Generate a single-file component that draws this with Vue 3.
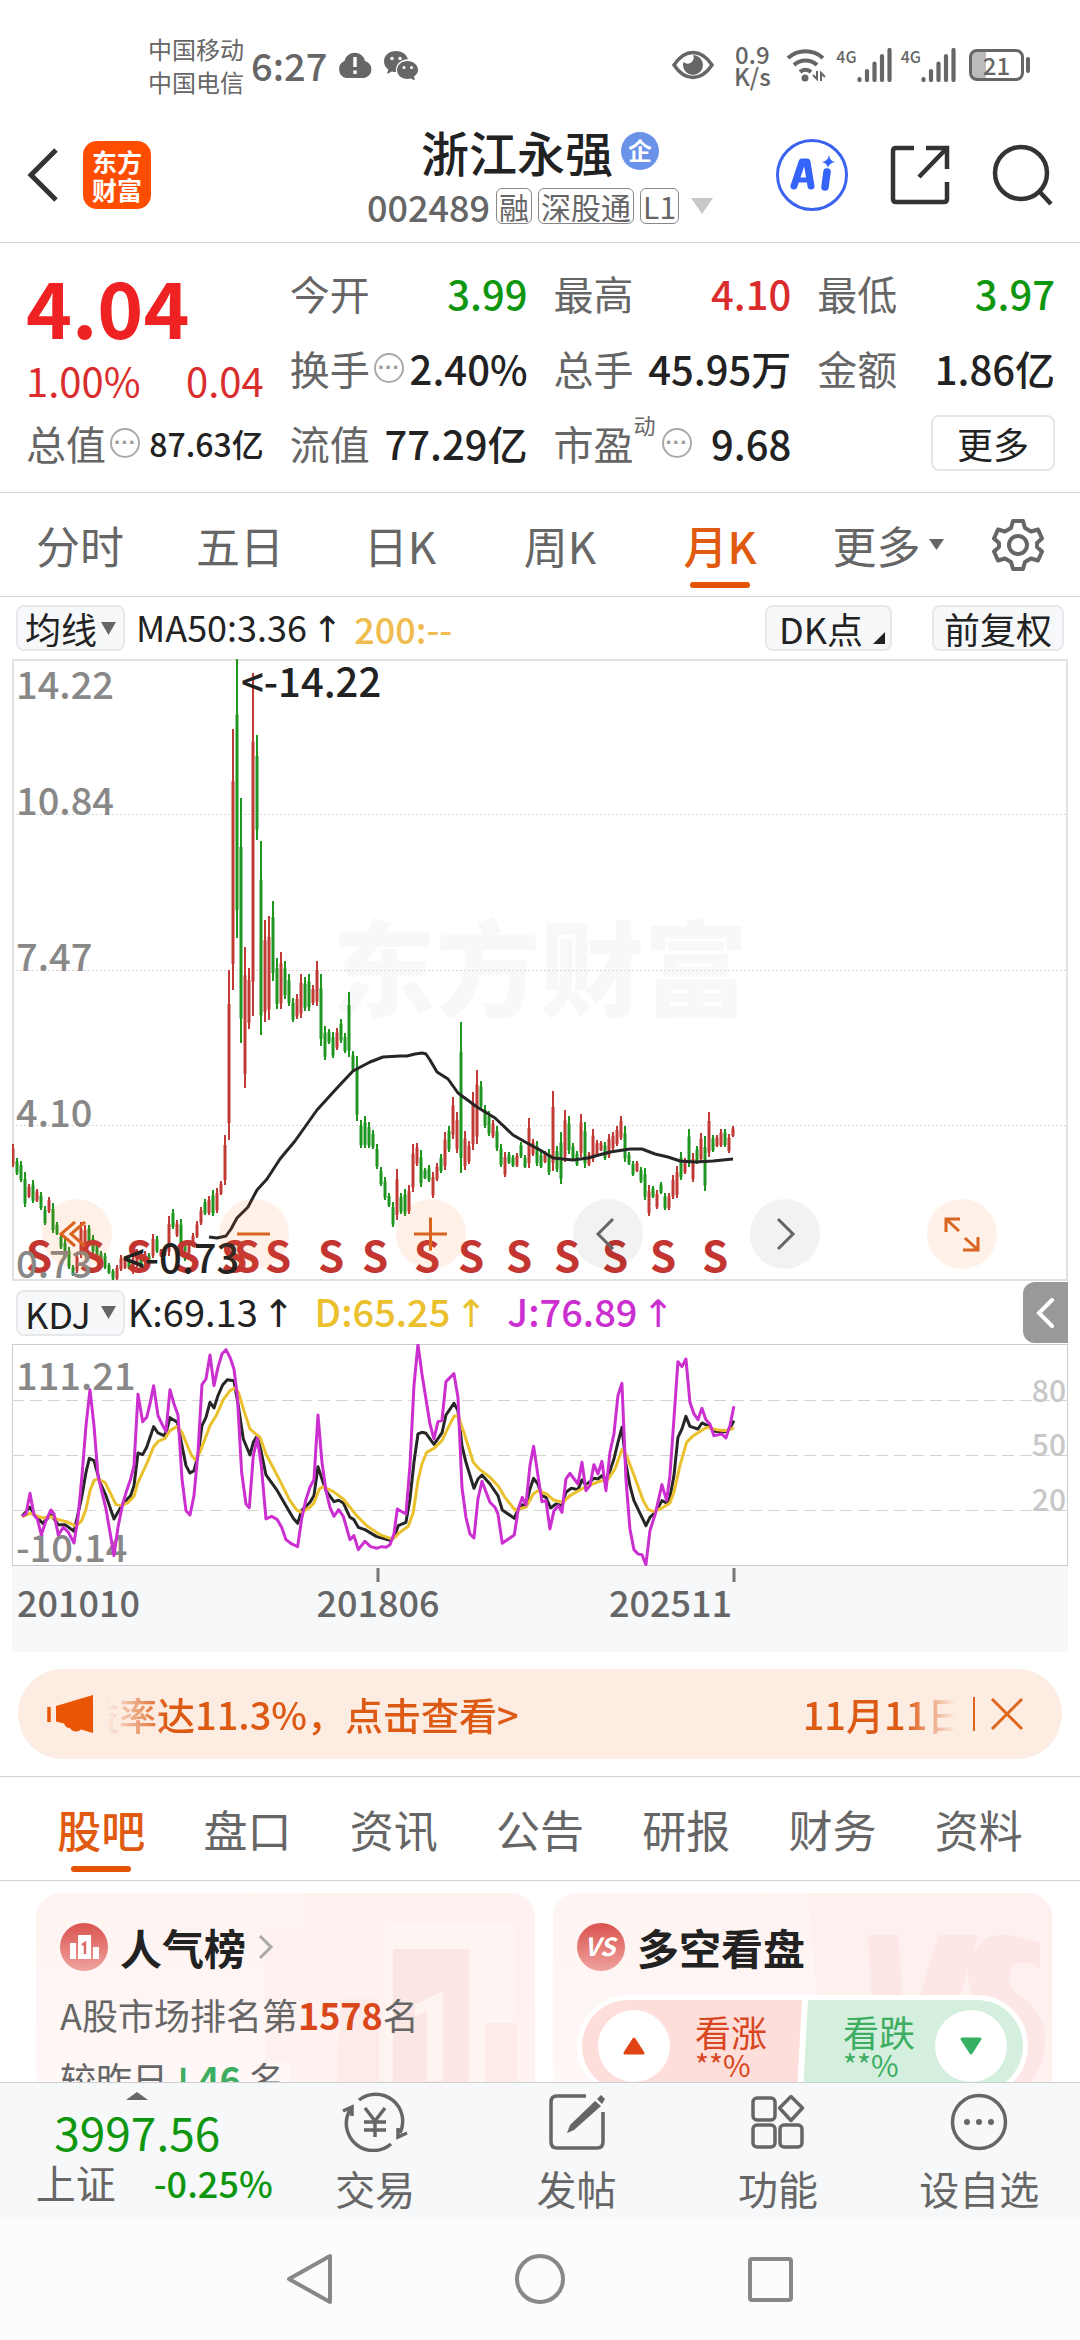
<script setup>
import { computed } from 'vue'

const quoteColumns = [
  [
    { label: '今开', value: '3.99', tone: 'down' },
    { label: '换手', value: '2.40%', hint: true },
    { label: '流值', value: '77.29亿' }
  ],
  [
    { label: '最高', value: '4.10', tone: 'up' },
    { label: '总手', value: '45.95万' },
    { label: '市盈', sup: '动', value: '9.68', hint: true }
  ],
  [
    { label: '最低', value: '3.97', tone: 'down' },
    { label: '金额', value: '1.86亿' }
  ]
]

const periods = ['分时', '五日', '日K', '周K', '月K']
const sections = ['股吧', '盘口', '资讯', '公告', '研报', '财务', '资料']

// Monthly bars: direction, then top and bottom of the range in chart units
const bars = `r485-508 g499-516 g502-523 g513-548 r525-539 g521-544 r530-543 g533-551 g547-566 r538-554
g544-574 g563-576 g575-590 g580-600 g588-610 g606-617 r594-614 r563-599 r566-592 g566-584
g576-594 g584-598 g592-606 g594-610 g604-615 g610-621 r606-621 r596-612 r598-610 g597-610
r596-615 r590-608 g594-612 r592-604 g594-606 r575-599 g577-594 r590-598 r589-597 r557-597
g550-570 r561-578 g560-589 g582-602 r584-595 r574-588 r562-579 r548-566 g540-556 r537-556
g531-557 r529-554 r522-536 r476-526 r311-481 r70-331 g0-279 g139-384 r288-429 r309-370
r14-357 g76-181 g182-376 r261-363 r257-361 g242-322 g299-350 r293-350 g302-340 g315-347
g339-363 r335-360 r315-359 g318-352 g315-352 r326-346 r302-347 g315-387 g367-401 g370-385
g373-399 r369-391 g360-384 g374-394 g333-398 g392-413 g397-462 g461-489 g457-489 g463-489
g471-490 g485-510 g508-527 g518-541 g534-548 g543-568 r510-561 g534-555 g530-557 r526-555
r485-533 r484-507 g491-528 g509-520 g506-523 r513-539 r504-522 g495-514 r473-511 g467-493
r438-480 r453-494 g363-514 r472-511 r482-505 r433-491 r411-485 g422-450 g446-469 g452-477
r461-479 g467-492 g485-508 r493-518 g493-505 g496-508 r494-508 g483-499 g496-509 r459-509
r480-497 g482-507 g493-509 r492-504 g490-516 r432-512 g487-513 g473-525 r451-503 g457-495
g484-501 g492-507 r455-498 g463-509 r493-507 r470-503 r481-497 r482-492 g483-501 r475-499
r473-491 r467-487 r457-481 g467-503 g493-506 g502-517 r502-513 g508-524 g509-541 r526-557
g527-539 r531-550 g523-535 g534-551 r534-551 r516-540 r507-539 g493-521 r499-515 g470-508
r494-523 g487-505 r474-503 g477-532 r453-498 g476-493 r476-488 r470-488 g470-488 r475-494 r467-478`

const candles = computed(() =>
  bars.split(/\s+/).map((bar, i) => {
    const [top, bottom] = bar.slice(1).split('-').map(Number)
    const span = bottom - top
    return {
      x: 1 + i * 4,
      top,
      bottom,
      bodyTop: top + span * 0.2,
      bodyBottom: bottom - span * 0.1,
      color: bar[0] === 'r' ? '#c23a35' : '#1e9620'
    }
  })
)

const sellMarks = [39, 92, 139, 187, 234, 247, 278, 331, 375, 427, 471, 519, 567, 615, 663, 715]

const ma50 = '209,578 217,579 226,577 231,570 237,559 248,548 257,531 267,520 280,500 295,482 317,451 337,429 353,412 370,403 383,398 400,397 407,397 415,395 422,394 426,395 430,401 437,413 448,420 458,434 477,448 495,459 513,476 527,484 540,491 553,499 573,501 588,499 610,493 630,490 642,490 655,495 668,498 680,502 695,503 713,502 733,500'

const lineJ = '66,712 78,705 90,643 102,708 112,720 124,768 138,725 153,693 162,705 175,768 190,745 205,760 222,792 234,715 246,590 258,440 270,332 282,440 294,590 306,640 318,690 330,760 342,830 354,745 368,675 380,635 392,600 402,560 414,346 428,428 440,415 450,375 461,320 474,410 486,435 498,458 510,332 522,375 534,408 546,600 558,695 570,708 582,650 594,520 606,317 618,300 630,228 642,320 654,265 666,225 678,212 690,235 702,270 712,350 725,580 738,675 748,686 760,530 772,478 784,560 798,720 815,712 832,722 845,745 858,782 875,795 893,803 905,720 917,665 930,625 942,602 954,408 966,550 978,635 990,685 1002,712 1016,692 1030,712 1050,782 1062,770 1075,812 1095,787 1112,803 1130,808 1145,803 1158,805 1170,797 1182,765 1192,690 1218,705 1230,560 1242,320 1254,196 1266,285 1290,435 1302,480 1314,428 1326,425 1338,308 1362,284 1374,355 1386,625 1398,715 1410,765 1422,777 1434,660 1446,607 1470,670 1485,685 1494,705 1507,793 1543,768 1555,690 1567,655 1578,678 1590,560 1601,502 1614,590 1626,668 1638,665 1650,750 1662,695 1675,680 1686,700 1698,600 1710,583 1734,615 1746,550 1758,635 1770,620 1782,557 1794,585 1806,547 1818,635 1830,520 1842,465 1854,350 1866,313 1878,600 1890,750 1902,812 1914,825 1926,827 1938,857 1950,755 1966,705 1986,617 2000,665 2010,590 2022,420 2034,248 2046,263 2058,240 2070,370 2082,405 2094,422 2106,388 2118,422 2130,435 2142,470 2166,465 2178,477 2190,440 2202,382'

const lineK = '66,712 90,685 104,708 128,733 153,708 175,737 195,737 222,757 234,705 246,650 258,580 268,538 282,545 300,610 318,650 342,720 368,675 392,650 402,620 414,522 428,527 440,505 461,443 474,462 492,470 500,455 510,416 532,430 546,500 558,560 570,582 582,575 594,530 606,440 618,415 630,370 642,387 654,350 668,318 682,302 702,305 715,380 730,480 750,528 760,490 772,470 784,520 798,588 832,635 858,680 880,718 893,733 905,695 930,670 942,650 954,563 966,600 978,635 1002,668 1016,664 1030,672 1050,715 1062,722 1075,745 1095,752 1130,773 1170,784 1182,775 1195,740 1218,730 1230,660 1242,550 1254,465 1266,460 1278,463 1302,496 1326,462 1338,408 1362,373 1374,395 1386,500 1398,550 1422,628 1434,600 1446,588 1470,615 1494,650 1507,693 1543,718 1555,690 1567,677 1578,680 1590,630 1601,598 1614,615 1626,650 1638,655 1652,687 1668,675 1686,680 1698,640 1714,628 1734,632 1746,603 1758,618 1782,598 1794,600 1806,590 1818,605 1830,575 1842,540 1854,490 1866,445 1878,555 1890,620 1902,665 1938,740 1950,715 1966,700 1986,665 2000,672 2010,655 2022,590 2034,475 2046,450 2058,412 2070,442 2094,450 2106,432 2130,443 2142,457 2178,458 2190,448 2202,425'

const lineD = '66,714 90,703 128,717 153,713 175,722 205,730 228,742 245,725 258,690 270,635 282,605 292,600 315,610 335,650 348,677 365,680 385,670 402,652 414,610 440,555 461,503 475,487 495,478 510,455 532,442 546,460 560,495 575,530 586,542 600,520 630,440 650,407 670,362 690,335 705,327 716,342 732,395 750,450 765,463 780,475 798,525 832,590 870,665 890,693 905,700 930,685 942,672 958,630 970,623 1000,638 1030,660 1070,710 1100,740 1140,767 1170,778 1182,778 1200,760 1225,742 1240,700 1254,605 1266,555 1280,520 1302,508 1326,485 1345,445 1362,412 1374,410 1390,455 1420,550 1440,572 1470,595 1495,622 1515,655 1545,693 1578,685 1600,645 1614,635 1640,645 1660,663 1690,670 1710,650 1745,630 1770,618 1800,607 1825,600 1845,570 1866,512 1880,530 1910,610 1930,665 1945,692 1962,698 1990,685 2010,672 2022,640 2040,560 2060,490 2080,470 2120,445 2150,452 2180,455 2202,447'

const controls = [
  { name: '最早', warm: true, d: 'M33 23 19 35l14 12M43 23 29 35l14 12' },
  { name: '缩小', warm: true, d: 'M18 35h33' },
  { name: '放大', warm: true, d: 'M18 35h33M34.5 18.500v33' },
  { name: '向左', warm: false, d: 'M40 20 25 35l15 15' },
  { name: '向右', warm: false, d: 'M28 20 43 35 28 50' },
  { name: '全屏', warm: true, d: 'M19 33V20h14M20 21l12 11M51 38v13H36M50 50 38 39' }
]
</script>

<template>
  <div class="app">
    <div class="status">
      <div class="carriers"><span>中国移动</span><span>中国电信</span></div>
      <span class="clock">6:27</span>
      <svg class="cloud" width="36" height="28" viewBox="0 0 36 28">
        <path d="M9 27a9 9 0 0 1-1.500-17A10.500 10.500 0 0 1 28 10a8.700 8.700 0 0 1-1 17Z" fill="#666" />
        <path d="M18 6v10M18 19.500v3.500" stroke="#fff" stroke-width="3.400" />
      </svg>
      <svg width="36" height="30" viewBox="0 0 36 30">
        <path d="M13 1C6 1 1 5.600 1 11.500c0 3.300 1.600 6 4.200 8L4 24l5-2.600c1.300.4 2.700.5 4 .5C12 15 17 9.500 25 9.300 23.500 4 18.600 1 13 1Z" fill="#666" />
        <path d="M24.500 11c-6 0-10.500 4-10.500 9s4.500 9 10.500 9c1.200 0 2.300-.2 3.300-.5L32 30.500l-1-4c2.600-1.700 4-4 4-6.500 0-5-4.500-9-10.500-9Z" fill="#666" />
        <g fill="#fff"><circle cx="9" cy="8.500" r="1.700" /><circle cx="17" cy="8.500" r="1.700" /><circle cx="21" cy="17.500" r="1.500" /><circle cx="28.500" cy="17.500" r="1.500" /></g>
      </svg>
      <div class="status-right">
        <svg width="42" height="30" viewBox="0 0 42 30">
          <path d="M2 15C8 6 14 2.500 21 2.500S34 6 40 15c-6 9-12 12.500-19 12.500S8 24 2 15Z" fill="none" stroke="#666" stroke-width="3.500" />
          <path d="M21 5a10 10 0 1 1-10 10c0-1 .2-2 .5-3a6 6 0 0 0 9.500-7Z" fill="#666" />
        </svg>
        <div class="speed"><span>0.9</span><span>K/s</span></div>
        <svg width="42" height="36" viewBox="0 0 42 36">
          <g fill="none" stroke="#666" stroke-width="4">
            <path d="M2 11a26 26 0 0 1 35 0M8 18a17 17 0 0 1 23 0M14 25a8 8 0 0 1 11 0" />
          </g>
          <circle cx="19" cy="31" r="3.500" fill="#666" />
          <path d="M31 24v8l-4-4M35 34v-8l4 4" fill="none" stroke="#666" stroke-width="2" />
        </svg>
        <div v-for="n in 2" :key="n" class="signal">
          <span>4G</span>
          <svg width="36" height="34" viewBox="0 0 36 34">
            <path d="M2.500 31v1M10 23v9M17.500 15.500V32M25 8v24M32.500 2v30" stroke="#666" stroke-width="4.200" stroke-linecap="round" />
          </svg>
        </div>
        <div class="battery"><span>21</span></div>
      </div>
    </div>

    <header class="header">
      <div class="head-side">
        <button class="icon-btn" aria-label="返回">
          <svg width="34" height="56" viewBox="0 0 34 56"><path d="M30 3 5 28l25 25" fill="none" stroke="#333" stroke-width="5" /></svg>
        </button>
        <div class="logo"><span>东方</span><span>财富</span></div>
      </div>
      <div class="head-title">
        <h1>浙江永强<span class="corp">企</span></h1>
        <div class="code">
          <span>002489</span><i>融</i><i>深股通</i><i>L1</i>
          <svg width="22" height="16" viewBox="0 0 22 16"><path d="M0 0h22L11 16Z" fill="#c8c8c8" /></svg>
        </div>
      </div>
      <div class="head-side head-actions">
        <button class="icon-btn" aria-label="Ai">
          <svg width="72" height="72" viewBox="0 0 72 72">
            <circle cx="36" cy="36" r="34.500" fill="#fff" stroke="#3b63f0" stroke-width="3" />
            <g fill="none" stroke="#3464fa" stroke-linecap="round" stroke-linejoin="round">
              <path d="m18 47 8-24h5l4 24" stroke-width="7" /><path d="M22 41h12" stroke-width="5" />
              <path d="m51 33-2 15" stroke-width="7.500" />
            </g>
            <path d="M53 16q1 6 6 7-6 1-7 6-1-5-6-6 6-1 7-7Z" fill="#3464fa" />
          </svg>
        </button>
        <button class="icon-btn" aria-label="分享">
          <svg width="60" height="60" viewBox="0 0 60 60"><g fill="none" stroke="#333" stroke-width="4.500"><path d="M24 3H6q-3 0-3 3v48q0 3 3 3h48q3 0 3-3V37" /><path d="M36 3h21v21M57 3 29 32" /></g></svg>
        </button>
        <button class="icon-btn" aria-label="搜索">
          <svg width="62" height="62" viewBox="0 0 62 62"><g fill="none" stroke="#333" stroke-width="4.500"><circle cx="29" cy="29" r="26" /><path d="m46 46 13 14" /></g></svg>
        </button>
      </div>
    </header>

    <section class="quote">
      <div class="quote-main">
        <strong>4.04</strong>
        <div class="change"><span>1.00%</span><span>0.04</span></div>
        <div class="cell small"><span class="label">总值</span><b class="hint">···</b><span class="value">87.63亿</span></div>
      </div>
      <div v-for="(col, c) in quoteColumns" :key="c" class="quote-col">
        <div v-for="cell in col" :key="cell.label" class="cell">
          <span class="label">{{ cell.label }}<sup v-if="cell.sup">{{ cell.sup }}</sup></span>
          <b v-if="cell.hint" class="hint">···</b>
          <span class="value" :class="cell.tone">{{ cell.value }}</span>
        </div>
        <div v-if="c === 2" class="cell"><button class="more">更多</button></div>
      </div>
    </section>

    <nav class="periods">
      <button v-for="p in periods" :key="p" :class="{ active: p === '月K' }">{{ p }}</button>
      <button class="wide">更多<svg width="15" height="11" viewBox="0 0 15 11"><path d="M0 0h15L7.500 11Z" fill="#666" /></svg></button>
      <button class="gear" aria-label="设置">
        <svg width="52" height="54" viewBox="0 0 52 54">
          <g fill="none" stroke="#666" stroke-width="4" stroke-linejoin="round">
            <path d="M21 3h10l2 7 6 3.500 7-2 4 9-5 4.500v4l5 4.500-4 9-7-2-6 3.500-2 7H21l-2-7-6-3.500-7 2-4-9L7 29v-4l-5-4.500 4-9 7 2 6-3.500Z" />
            <circle cx="26" cy="27" r="9" />
          </g>
        </svg>
      </button>
    </nav>

    <div class="indicator">
      <button class="chip">均线<svg width="15" height="13" viewBox="0 0 15 13"><path d="M0 0h15L7.500 13Z" fill="#666" /></svg></button>
      <span class="ma">MA50:3.36<em>↑</em></span>
      <span class="ma200">200:--</span>
      <button class="chip dk">DK点<svg width="12" height="12" viewBox="0 0 12 12"><path d="M12 0v12H0Z" fill="#222" /></svg></button>
      <button class="chip adjust">前复权</button>
    </div>

    <div class="chart">
      <svg viewBox="0 0 1056 622" class="plot">
        <text x="528" y="350" text-anchor="middle" font-size="104" font-weight="900" fill="#f8f8f8">东方财富</text>
        <g stroke="#d8d8d8" stroke-width="1" stroke-dasharray="2 2"><path d="M0 155.500h1056M0 311.500h1056M0 466.500h1056" /></g>
        <rect x="1" y="1" width="1054" height="620" fill="none" stroke="#e2e2e2" stroke-width="2" />
        <g v-for="c in candles" :key="c.x" :stroke="c.color">
          <line :x1="c.x" :x2="c.x" :y1="c.top" :y2="c.bottom" stroke-width="2" />
          <line :x1="c.x" :x2="c.x" :y1="c.bodyTop" :y2="c.bodyBottom" stroke-width="3" />
        </g>
        <polyline :points="ma50" transform="translate(-12 0)" fill="none" stroke="#262626" stroke-width="3" stroke-linejoin="round" />
        <g font-size="42" font-weight="700" fill="#c23531" text-anchor="middle">
          <text v-for="x in sellMarks" :key="x" :x="x - 12" y="613">S</text>
        </g>
        <g font-size="38" fill="#888">
          <text x="4" y="40">14.22</text><text x="4" y="156">10.84</text><text x="4" y="312">7.47</text>
          <text x="4" y="468">4.10</text><text x="4" y="619">0.73</text>
        </g>
        <g font-size="40" fill="#222"><text x="229" y="38">&lt;-14.22</text><text x="110" y="614">&lt;-0.73</text></g>
      </svg>
      <div class="controls">
        <button v-for="b in controls" :key="b.name" :class="{ warm: b.warm }" :aria-label="b.name">
          <svg width="70" height="70" viewBox="0 0 70 70"><path :d="b.d" fill="none" :stroke="b.warm ? '#d9641e' : '#666'" stroke-width="3" /></svg>
        </button>
      </div>
    </div>

    <div class="indicator kdj">
      <button class="chip">KDJ<svg width="15" height="13" viewBox="0 0 15 13"><path d="M0 0h15L7.500 13Z" fill="#666" /></svg></button>
      <span class="k">K:69.13<em>↑</em></span>
      <span class="d">D:65.25<em>↑</em></span>
      <span class="j">J:76.89<em>↑</em></span>
      <button class="drawer" aria-label="展开">
        <svg width="20" height="30" viewBox="0 0 20 30"><path d="M16 2 3 15l13 13" fill="none" stroke="#fff" stroke-width="4" stroke-linecap="round" /></svg>
      </button>
    </div>

    <div class="chart">
      <svg viewBox="0 0 1056 222" class="plot">
        <rect x=".5" y=".5" width="1055" height="221" fill="none" stroke="#ccc" />
        <g stroke="#d4d4d4" stroke-dasharray="12 6"><path d="M0 56.500h1056M0 111.500h1056M0 166.500h1056" /></g>
        <g font-size="38" fill="#888"><text x="4" y="46">111.21</text><text x="4" y="218">-10.14</text></g>
        <g font-size="30" fill="#c8c8c8" text-anchor="end"><text x="1054" y="58">80</text><text x="1054" y="112">50</text><text x="1054" y="167">20</text></g>
        <g transform="translate(-12 -65) scale(.3333)" fill="none" stroke-width="9" stroke-linejoin="round">
          <polyline :points="lineK" stroke="#262626" />
          <polyline :points="lineD" stroke="#eac02c" />
          <polyline :points="lineJ" stroke="#cc2fd0" />
        </g>
      </svg>
      <svg viewBox="0 0 1056 86" class="plot axis">
        <path d="M366 2v14M722 2v14" stroke="#777" stroke-width="3" />
        <g font-size="36" fill="#666">
          <text x="5" y="51">201010</text><text x="366" y="51" text-anchor="middle">201806</text><text x="720" y="51" text-anchor="end">202511</text>
        </g>
      </svg>
    </div>

    <div class="notice">
      <svg width="48" height="40" viewBox="0 0 48 40"><path d="M2 13v15" stroke="#ea5504" stroke-width="3.500" /><path d="M9 12 46 1v38l-12-3.500c-3 3-9 2.500-11-1.500-5 0-5-3.500-6-4.500l-8-2Z" fill="#ea5504" /></svg>
      <div class="ticker"><span>益率达11.3%，点击查看&gt;</span><span>11月11日</span></div>
      <button class="icon-btn close" aria-label="关闭">
        <svg width="34" height="34" viewBox="0 0 34 34"><path d="m2 2 30 30M32 2 2 32" stroke="#e0651c" stroke-width="3" /></svg>
      </button>
    </div>

    <nav class="sections">
      <button v-for="s in sections" :key="s" :class="{ active: s === '股吧' }">{{ s }}</button>
    </nav>

    <main class="cards">
      <article class="card">
        <svg class="deco" width="270" height="230" viewBox="0 0 270 230">
          <path d="M40 0h230v230H25v-60H0V35h40Z" fill="#fdeeec" opacity=".6" />
          <path d="M120 30h130v200H120Z" fill="#fef5f3" /><path d="M128 56h76v174h-76Z" fill="#fce6e4" /><path d="M76 106h38v124H70ZM220 130h32v100h-32Z" fill="#fdebe9" /><path d="m150 112 28-14v90h-16v-70l-12 5Z" fill="#fef5f3" />
        </svg>
        <h2>
          <svg width="48" height="48" viewBox="0 0 48 48">
            <circle cx="24" cy="24" r="24" fill="url(#badge)" />
            <defs><linearGradient id="badge" x2="0" y2="1"><stop stop-color="#d9534f" /><stop offset="1" stop-color="#f0a29e" /></linearGradient></defs>
            <path d="M10 20h6v16h-6ZM18 12h13v24H18ZM33 24h6v12h-6Z" fill="#fff" /><path d="m22 22 3-2v11" fill="none" stroke="#dc6a66" stroke-width="2.500" />
          </svg>
          人气榜
          <svg class="arrow" width="16" height="26" viewBox="0 0 16 26"><path d="m2 2 11 11L2 24" fill="none" stroke="#aaa" stroke-width="3" /></svg>
        </h2>
        <p>A股市场排名第<b>1578</b>名</p>
        <p>较昨日<b class="fall"><em>↓</em>46</b> 名</p>
      </article>
      <article class="card">
        <svg class="deco" width="244" height="230" viewBox="0 0 244 230">
          <path d="M0 0h244v230H20Z" fill="#fdeeec" opacity=".7" />
          <path d="M60 42h30l8 110L130 42h40l-55 188H72ZM232 50q-66-26-72 30c0 44 40 36 30 68-6 22-30 20-48 10l-14 40c50 26 100 10 108-40 8-56-42-50-34-78 4-14 18-14 30-4Z" fill="#fce5e3" opacity=".8" />
        </svg>
        <h2>
          <svg width="48" height="48" viewBox="0 0 48 48"><circle cx="24" cy="24" r="24" fill="url(#badge)" /><text x="23" y="33" text-anchor="middle" font-size="25" font-weight="700" font-style="italic" fill="#fff">VS</text></svg>
          多空看盘
        </h2>
        <div class="vote">
          <button class="bull"><i><svg width="24" height="20" viewBox="0 0 24 20"><path d="M12 3 21 17H3Z" fill="#e04413" stroke="#e04413" stroke-width="3" stroke-linejoin="round" /></svg></i><span>看涨<small>**%</small></span></button>
          <button class="bear"><span>看跌<small>**%</small></span><i><svg width="24" height="20" viewBox="0 0 24 20"><path d="M12 17 21 3H3Z" fill="#37b064" stroke="#37b064" stroke-width="3" stroke-linejoin="round" /></svg></i></button>
        </div>
      </article>
    </main>

    <footer class="toolbar">
      <button class="index">
        <svg width="22" height="8" viewBox="0 0 22 8"><path d="M0 8h22L11 0Z" fill="#666" /></svg>
        <strong>3997.56</strong>
        <span class="index-row"><span>上证</span><small>-0.25%</small></span>
      </button>
      <button>
        <svg width="66" height="60" viewBox="0 0 66 60"><g fill="none" stroke="#666" stroke-width="3.500"><path d="M17 8A27 27 0 0 1 58 41M49 52A27 27 0 0 1 8 18M1 19l9-4v9M65 41l-9 4v-9" /><path d="m23 16 10 13 10-13M33 29v16M22 30h22M22 38h22" /></g></svg>
        交易
      </button>
      <button>
        <svg width="60" height="60" viewBox="0 0 60 60"><path d="M39 4H10q-6 0-6 6v40q0 6 6 6h40q6 0 6-6V20" fill="none" stroke="#666" stroke-width="3.500" /><path d="m48 9 6 5-27 24-7 3 3-8ZM50 7l4-4 4 4-3 5Z" fill="#666" /></svg>
        发帖
      </button>
      <button>
        <svg width="60" height="60" viewBox="0 0 60 60"><g fill="none" stroke="#666" stroke-width="3.500"><rect x="5" y="6" width="22" height="22" rx="4" /><rect x="5" y="33" width="22" height="22" rx="4" /><rect x="32" y="33" width="22" height="22" rx="4" /><path d="M43 4.500 54.500 16 43 28.500 31.500 16Z" stroke-linejoin="round" /></g></svg>
        功能
      </button>
      <button>
        <svg width="60" height="60" viewBox="0 0 60 60"><circle cx="30" cy="30" r="26.500" fill="none" stroke="#666" stroke-width="3.500" /><g fill="#666"><circle cx="18" cy="30" r="3" /><circle cx="30" cy="30" r="3" /><circle cx="42" cy="30" r="3" /></g></svg>
        设自选
      </button>
    </footer>

    <div class="sysnav">
      <button aria-label="后退"><svg width="52" height="52" viewBox="0 0 52 52"><path d="M46 3v46L5 26Z" fill="none" stroke="#888" stroke-width="4" stroke-linejoin="round" /></svg></button>
      <button aria-label="主页"><svg width="52" height="52" viewBox="0 0 52 52"><circle cx="26" cy="26" r="23" fill="none" stroke="#888" stroke-width="4" /></svg></button>
      <button aria-label="最近任务"><svg width="52" height="52" viewBox="0 0 52 52"><rect x="6" y="6" width="41" height="41" rx="2" fill="none" stroke="#888" stroke-width="4" /></svg></button>
    </div>
  </div>
</template>

<style>
body {
  background: #fff;
}
</style>

<style scoped>
.app {
  display: flex;
  flex-direction: column;
  height: 100vh;
  overflow: hidden;
  background: #fff;
  color: #222;
  font-family: "Noto Sans CJK SC", "Noto Sans", sans-serif;
  font-size: 36px;
  line-height: 1;
}
button {
  margin: 0;
  padding: 0;
  border: 0;
  background: none;
  font: inherit;
  color: inherit;
}
svg {
  display: block;
  flex: none;
}
em {
  font-family: "DejaVu Sans", sans-serif;
  font-style: normal;
}
.app > * {
  flex: none;
}

.status {
  display: flex;
  align-items: center;
  height: 70px;
  padding: 30px 56px 8px 148px;
  color: #666;
  font-weight: 500;
}
.carriers,
.speed {
  display: flex;
  flex-direction: column;
  font-size: 24px;
  line-height: 33px;
}
.carriers {
  font-weight: 400;
}
.clock {
  margin: 0 10px 0 7px;
  font-size: 38px;
}
.cloud {
  margin-right: 10px;
}
.status-right {
  display: flex;
  align-items: center;
  margin-left: auto;
}
.speed {
  width: 40px;
  margin: 0 14px 0 18px;
  line-height: 22px;
  text-align: center;
}
.signal {
  display: flex;
  align-items: flex-start;
  margin-left: 8px;
}
.signal span {
  font-size: 16px;
}
.battery {
  position: relative;
  width: 49px;
  height: 26px;
  margin-left: 12px;
  border: 3px solid #666;
  border-radius: 8px;
  background: linear-gradient(90deg, #bbb 14px, transparent 14px);
  font-size: 24px;
  line-height: 25px;
  text-align: center;
}
.battery::after {
  content: "";
  position: absolute;
  top: 5px;
  right: -9px;
  width: 4px;
  height: 16px;
  border-radius: 2px;
  background: #666;
}

.header {
  display: flex;
  align-items: center;
  justify-content: space-between;
  height: 134px;
  padding: 0 26px 0 26px;
  border-bottom: 1px solid #d0d0d0;
}
.head-side {
  display: flex;
  flex: 1;
  align-items: center;
  gap: 23px;
}
.head-actions {
  justify-content: flex-end;
  gap: 42px;
}
.logo {
  display: flex;
  flex-direction: column;
  align-items: center;
  justify-content: center;
  width: 68px;
  height: 68px;
  border-radius: 14px;
  background: #ff4d00;
  color: #fff;
  font-size: 25px;
  font-weight: 700;
  line-height: 28px;
}
.head-title {
  display: flex;
  flex-direction: column;
  align-items: center;
  gap: 13px;
}
h1 {
  display: flex;
  align-items: center;
  gap: 8px;
  margin: 0;
  font-size: 48px;
  font-weight: 500;
}
.corp {
  width: 38px;
  height: 38px;
  border-radius: 50%;
  background: #6a92e8;
  color: #fff;
  font-size: 24px;
  font-weight: 700;
  line-height: 36px;
  text-align: center;
}
.code {
  display: flex;
  align-items: center;
  gap: 6px;
  color: #666;
}
.code span {
  font-weight: 500;
}
.code i {
  padding: 0 2px;
  border: 1px solid #888;
  border-radius: 6px;
  font-size: 30px;
  font-style: normal;
  line-height: 34px;
}
.code svg {
  margin-left: 6px;
}

.quote {
  display: grid;
  grid-template-columns: repeat(4, minmax(0, 1fr));
  column-gap: 26px;
  padding: 12px 25px 12px 26px;
  border-bottom: 1px solid #d0d0d0;
  font-size: 40px;
}
.quote-main strong {
  display: block;
  color: #ee2222;
  font-size: 78px;
  line-height: 100px;
}
.change {
  display: flex;
  justify-content: space-between;
  color: #d92d2d;
  line-height: 50px;
}
.cell {
  display: flex;
  align-items: center;
  height: 75px;
  white-space: nowrap;
}
.label {
  position: relative;
  color: #666;
}
.label sup {
  position: absolute;
  top: -10px;
  left: 100%;
  font-size: 22px;
  line-height: 22px;
}
.label:has(sup) {
  margin-right: 24px;
}
.hint {
  width: 26px;
  height: 26px;
  margin-left: 4px;
  border: 2px solid #aaa;
  border-radius: 50%;
  color: #999;
  font-family: "Liberation Sans", sans-serif;
  font-size: 22px;
  line-height: 25px;
  text-align: center;
}
.value {
  margin-left: auto;
  font-weight: 500;
}
.small .value {
  font-size: 32px;
}
.up {
  color: #d92d2d;
}
.down {
  color: #0e960e;
}
.more {
  width: 124px;
  height: 56px;
  margin-left: auto;
  border: 2px solid #e6e6e6;
  border-radius: 8px;
  font-size: 36px;
}

.periods,
.sections {
  display: flex;
  border-bottom: 1px solid #d0d0d0;
  color: #666;
  font-size: 44px;
}
.periods button,
.sections button {
  position: relative;
  display: flex;
  flex: 160 0 0;
  align-items: center;
  justify-content: center;
  gap: 8px;
  height: 103px;
}
.periods .wide {
  flex-grow: 176;
}
.periods .gear {
  flex-grow: 84;
}
.periods {
  padding-right: 20px;
}
.periods .active,
.sections .active {
  color: #e05a10;
  font-weight: 500;
}
.active::after {
  content: "";
  position: absolute;
  bottom: 8px;
  width: 60px;
  height: 6px;
  border-radius: 3px;
  background: #e35205;
}

.indicator {
  display: flex;
  align-items: center;
  height: 62px;
  padding: 0 16px;
}
.chip {
  display: flex;
  align-items: center;
  gap: 4px;
  height: 46px;
  padding: 0 7px;
  border: 2px solid #e6e8eb;
  border-radius: 8px;
  background: #f7f8fa;
}
.ma {
  margin: 0 12px 0 11px;
}
.indicator em {
  margin-left: 5px;
}
.ma200 {
  margin-right: auto;
  color: #f0bc50;
  font-weight: 500;
}
.indicator .dk {
  margin-right: 40px;
  padding: 0 5px 0 12px;
}
.dk svg {
  align-self: flex-end;
  margin: 0 0 5px 6px;
}
.adjust {
  padding: 0 10px;
}
.kdj {
  height: 63px;
  padding-right: 12px;
  font-size: 38px;
}
.kdj .chip {
  gap: 10px;
  margin-right: 3px;
  font-size: 36px;
}
.kdj span {
  margin-right: 20px;
}
.d {
  color: #eac02c;
  font-weight: 500;
}
.j {
  color: #cc2fd0;
  font-weight: 500;
}
.drawer {
  display: flex;
  align-items: center;
  justify-content: center;
  width: 45px;
  height: 61px;
  margin-left: auto;
  border-radius: 12px 0 0 12px;
  background: #999;
}

.chart {
  position: relative;
  margin: 0 12px;
  font-weight: 500;
}
.plot {
  width: 100%;
  height: auto;
}
.axis {
  background: #f7f8fa;
}
.controls {
  position: absolute;
  right: 71px;
  bottom: 12px;
  left: 30px;
  display: flex;
  justify-content: space-between;
}
.controls button {
  border-radius: 50%;
  background: rgba(0, 0, 0, 0.05);
}
.controls .warm {
  background: rgba(255, 110, 30, 0.1);
}

.notice {
  display: flex;
  align-items: center;
  height: 90px;
  margin: 17px 18px;
  padding: 0 38px 0 29px;
  border-radius: 45px;
  background: #fcece2;
  color: #dd5a14;
  font-size: 38px;
  font-weight: 500;
}
.ticker {
  display: flex;
  flex: 1;
  gap: 284px;
  margin: 0 18px 0 12px;
  overflow: hidden;
  line-height: 50px;
  white-space: nowrap;
  mask-image: linear-gradient(90deg, transparent, #000 60px, #000 calc(100% - 50px), transparent);
}
.ticker span:first-child {
  margin-left: -26px;
}
.close {
  padding-left: 15px;
  border-left: 2px solid #e0651c;
}

.sections {
  padding: 0 28px;
  border-top: 1px solid #d0d0d0;
}

.app > .cards {
  display: flex;
  flex: 1;
  gap: 18px;
  min-height: 0;
  padding: 12px 28px 0 36px;
  overflow: hidden;
}
.card {
  position: relative;
  flex: 1;
  height: 300px;
  padding: 0 24px;
  overflow: hidden;
  border-radius: 24px;
  background: linear-gradient(180deg, #fef4f2, #fffafa);
}
.deco {
  position: absolute;
  top: 0;
  right: 0;
}
.card h2 {
  position: relative;
  display: flex;
  align-items: center;
  gap: 12px;
  margin: 30px 0 0;
  font-size: 42px;
  font-weight: 700;
}
.card p {
  position: relative;
  margin: 22px 0 0;
  color: #666;
  line-height: 42px;
}
.card p b {
  color: #d9471a;
}
.card .fall {
  color: #3dad62;
}
.vote {
  position: relative;
  display: flex;
  gap: 1px;
  height: 92px;
  margin-top: 24px;
  overflow: hidden;
  border: 5px solid #fff;
  border-radius: 52px;
  background: #fff;
}
.vote button {
  display: flex;
  flex: 1;
  align-items: center;
}
.vote .bull {
  gap: 25px;
  padding-left: 16px;
  background: #fddedb;
  color: #d8471f;
  clip-path: polygon(0 0, 100% 0, calc(100% - 5px) 100%, 0 100%);
}
.vote .bear {
  gap: 20px;
  justify-content: flex-end;
  padding-right: 16px;
  background: #d4efdd;
  color: #3dad62;
  clip-path: polygon(5px 0, 100% 0, 100% 100%, 0 100%);
}
.vote i {
  display: flex;
  align-items: center;
  justify-content: center;
  width: 72px;
  height: 72px;
  border-radius: 50%;
  background: #fff;
}
.vote span {
  text-align: left;
}
.vote small {
  display: block;
  font-size: 30px;
}

.toolbar {
  display: grid;
  grid-template-columns: 274fr repeat(4, 201fr);
  height: 135px;
  border-top: 1px solid #ccd0d3;
  background: #f6f8fa;
  color: #666;
  font-size: 40px;
}
.toolbar button {
  display: flex;
  flex-direction: column;
  align-items: center;
  gap: 16px;
  padding-top: 9px;
}
.toolbar .index {
  gap: 8px;
}
.index strong {
  color: #0e960e;
  font-size: 46px;
  font-weight: 400;
}
.index-row {
  display: flex;
  align-items: center;
  gap: 38px;
  padding-left: 34px;
}
.index small {
  color: #0e960e;
  font-size: 36px;
  font-weight: 500;
}

.sysnav {
  display: flex;
  align-items: center;
  justify-content: center;
  gap: 178px;
  height: 122px;
  background: #fcfcfc;
}
</style>
